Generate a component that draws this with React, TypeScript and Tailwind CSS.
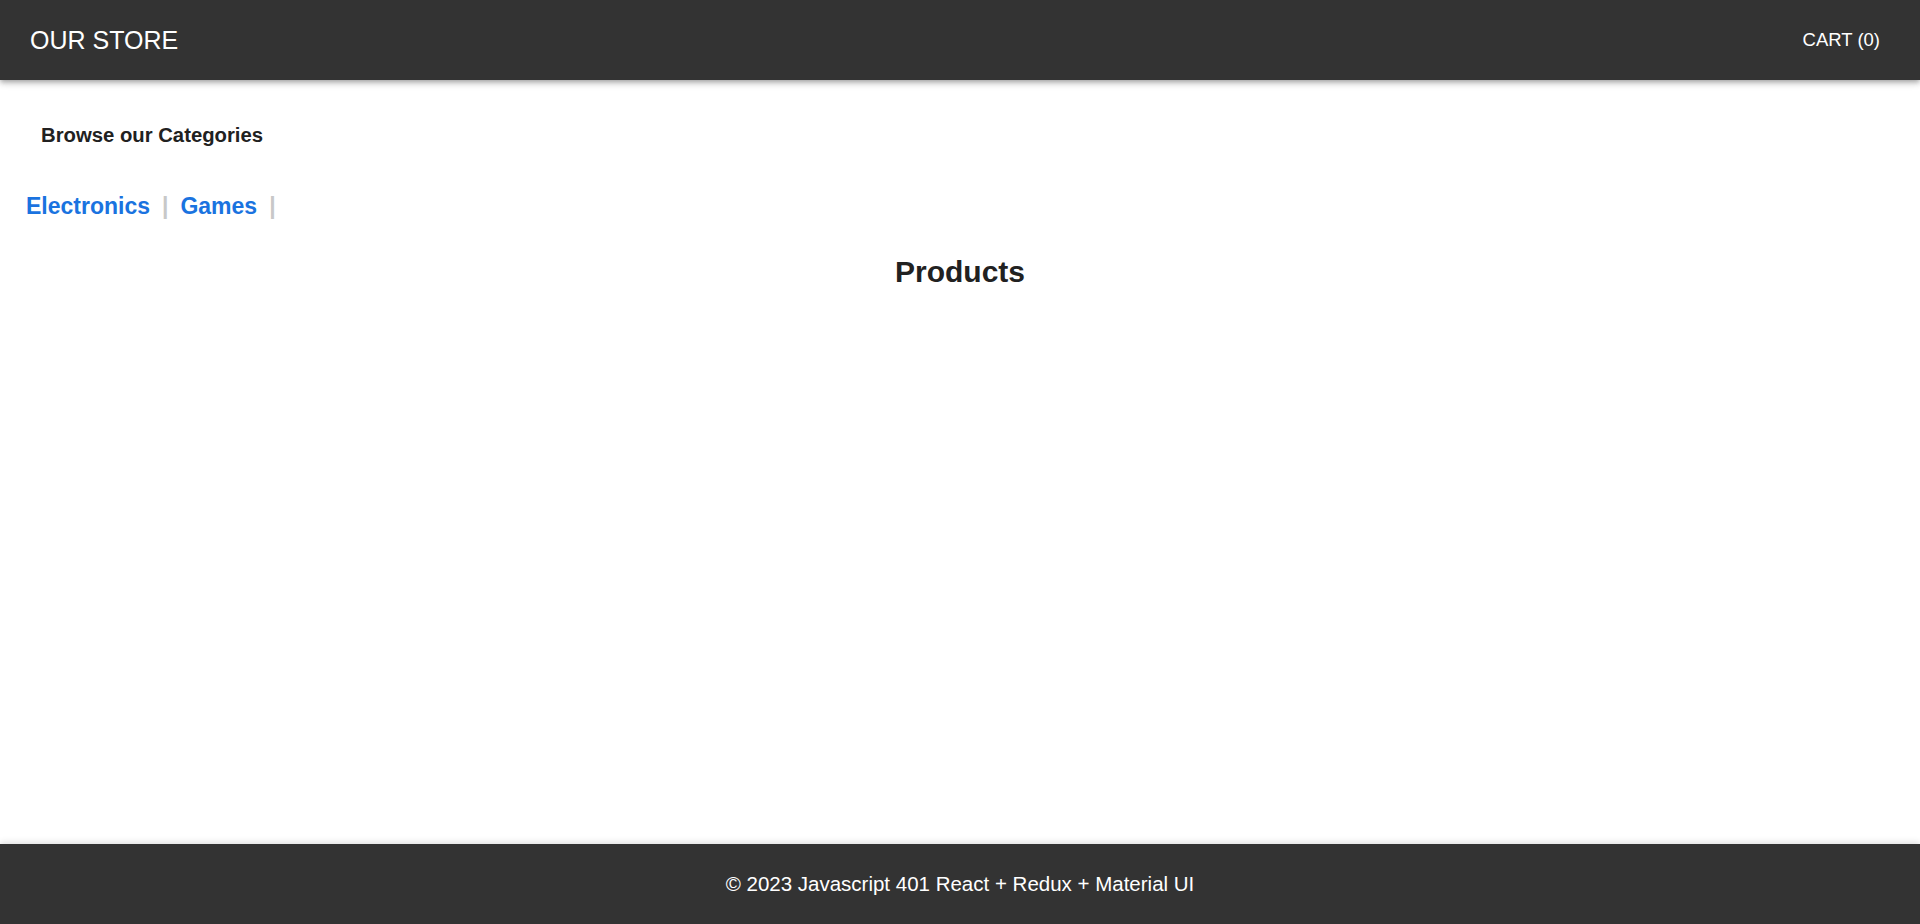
const categories = ["Electronics", "Games"];

const Header = () => (
  <header className="relative z-10 flex h-[80px] items-center justify-between bg-[#333333] pl-[30px] pr-[40px] text-white shadow-[0_2px_4px_-1px_rgba(0,0,0,0.2),0_4px_5px_0_rgba(0,0,0,0.14),0_1px_10px_0_rgba(0,0,0,0.12)]">
    <div className="text-[25px] leading-none">OUR STORE</div>
    <button className="text-[18.5px] font-medium leading-none">CART (0)</button>
  </header>
);

const Categories = () => (
  <div className="pl-[26px] pt-[41px]">
    <div className="flex items-center text-[23px] font-bold leading-[30px]">
      {categories.map((cat) => (
        <div key={cat} className="flex items-center">
          <a href="#" className="text-[#1a73e0]">
            {cat}
          </a>
          <span className="mx-[12px] text-[#c8c8c8]">|</span>
        </div>
      ))}
    </div>
  </div>
);

export default function App() {
  return (
    <div
      className="flex h-screen flex-col bg-white"
      style={{ fontFamily: '"Liberation Sans", Arial, sans-serif' }}
    >
      <Header />
      <main className="flex-1">
        <div className="pl-[41px] pt-[40px] text-[20.3px] font-bold leading-[30px] text-[#212121]">
          Browse our Categories
        </div>
        <Categories />
        <h2 className="mt-[33px] text-center text-[30px] font-bold leading-[36px] text-[#212121]">
          Products
        </h2>
      </main>
      <footer className="flex h-[80px] items-center justify-center bg-[#333333] text-[20.5px] text-white shadow-[0_-2px_6px_rgba(0,0,0,0.12)]">
        © 2023 Javascript 401 React + Redux + Material UI
      </footer>
    </div>
  );
}
